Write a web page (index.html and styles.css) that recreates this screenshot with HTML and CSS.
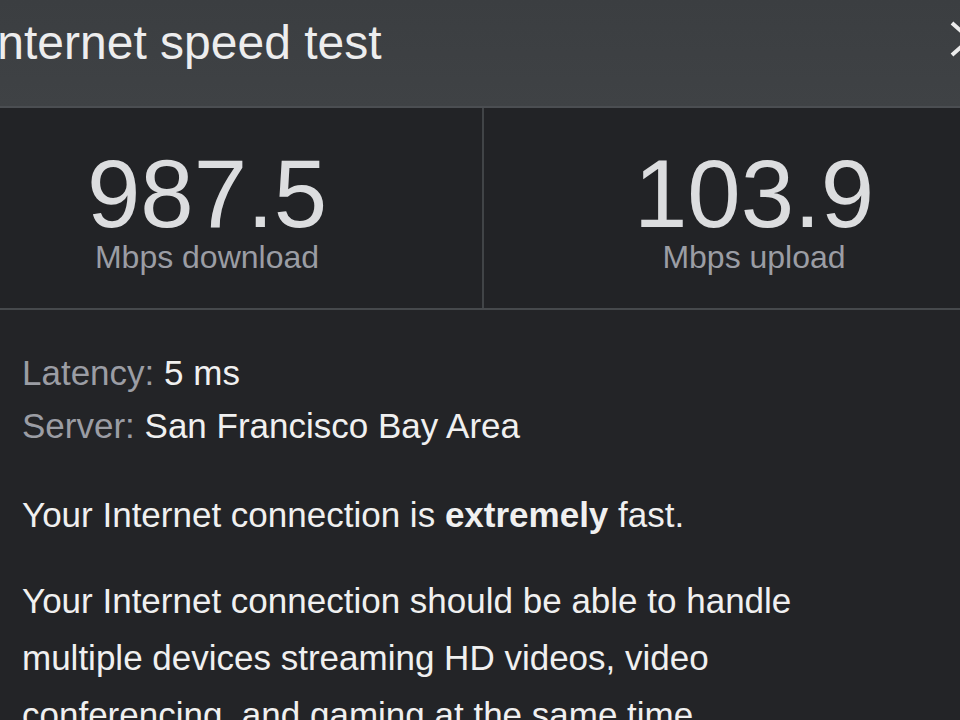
FILE: index.html
```html
<!DOCTYPE html>
<html lang="en">
<head>
<meta charset="utf-8">
<title>Internet speed test</title>
<link rel="stylesheet" href="styles.css">
</head>
<body>
<div class="card">
  <header class="header">
    <h1 class="title">Internet speed test</h1>
    <svg class="close" viewBox="0 0 40 40" width="40" height="40" aria-hidden="true">
      <path d="M2 4 L38 36 M2 36 L38 4" stroke="#ececec" stroke-width="4" stroke-linecap="butt" fill="none"/>
    </svg>
  </header>
  <section class="stats">
    <div class="stat">
      <div class="stat-num">987.5</div>
      <div class="stat-label">Mbps download</div>
    </div>
    <div class="stat stat-right">
      <div class="stat-num">103.9</div>
      <div class="stat-label">Mbps upload</div>
    </div>
  </section>
  <section class="details">
    <div class="meta">
      <div><span class="key">Latency:</span> <span class="val">5 ms</span></div>
      <div><span class="key">Server:</span> <span class="val">San Francisco Bay Area</span></div>
    </div>
    <p class="para first">Your Internet connection is <b>extremely</b> fast.</p>
    <p class="para">Your Internet connection should be able to handle multiple devices streaming HD videos, video conferencing, and gaming at the same time.</p>
  </section>
</div>
</body>
</html>
```

FILE: styles.css
```css
html, body {
  margin: 0;
  padding: 0;
}
body {
  background: #232427;
  overflow: hidden;
  width: 960px;
  height: 720px;
  font-family: "Liberation Sans", Arial, sans-serif;
}
.card {
  margin-left: -60px;
  width: 1084px;
}
.header {
  box-sizing: border-box;
  height: 108px;
  background: linear-gradient(#3b3e41, #3f4245);
  border-bottom: 2px solid #4b4e52;
  display: flex;
  justify-content: space-between;
  align-items: flex-start;
  padding: 16px 34px 0 44px;
}
.title {
  margin: 0;
  font-size: 48px;
  line-height: 54px;
  font-weight: normal;
  color: #ededee;
}
.close {
  margin-top: 3px;
  display: block;
}
.stats {
  display: grid;
  grid-template-columns: 542px 542px;
  height: 202px;
  box-sizing: border-box;
  border-bottom: 2px solid #46494c;
  background: #222326;
}
.stat {
  display: flex;
  flex-direction: column;
  align-items: center;
  padding-top: 42px;
  box-sizing: border-box;
}
.stat:first-child {
  padding-right: 8px;
}
.stat-right {
  border-left: 2px solid #414447;
}
.stat-num {
  font-size: 96px;
  line-height: 88px;
  color: #dcdddf;
}
.stat-label {
  font-size: 32px;
  line-height: 38px;
  color: #9b9da4;
}
.details {
  padding: 36px 0 0 82px;
  color: #ececec;
  font-size: 35px;
}
.meta {
  line-height: 53px;
}
.key {
  color: #9b9da4;
}
.val {
  color: #f0f0f0;
}
.para {
  margin: 29px 0 0 0;
  line-height: 57px;
  max-width: 870px;
  color: #f0f0f0;
}
.para.first {
  margin-top: 34px;
}
.para b {
  font-weight: bold;
}
```
